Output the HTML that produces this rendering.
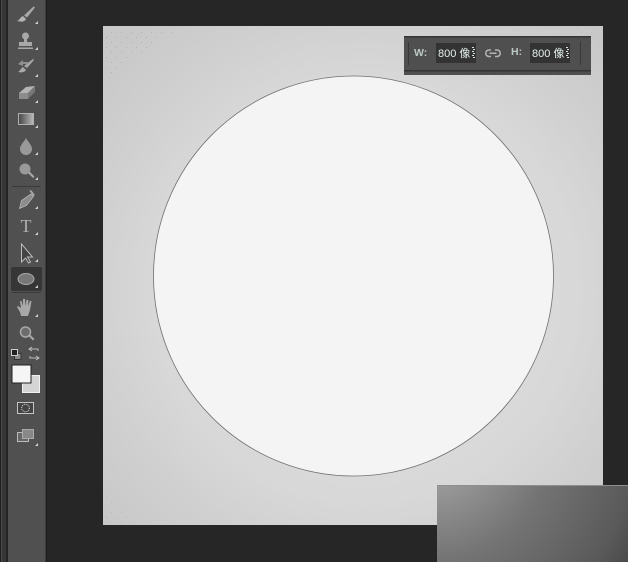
<!DOCTYPE html>
<html><head><meta charset="utf-8"><style>
html,body{margin:0;padding:0;background:#262626}
svg{display:block}
text{font-family:"Liberation Sans","Noto Sans CJK SC",sans-serif}
</style></head><body>
<svg width="628" height="562" viewBox="0 0 628 562" xmlns="http://www.w3.org/2000/svg">
<defs>
<radialGradient id="bg" gradientUnits="userSpaceOnUse" cx="365" cy="290" r="350">
<stop offset="0" stop-color="#e2e2e2"/><stop offset="0.6" stop-color="#d8d8d8"/><stop offset="0.78" stop-color="#d0d0d0"/><stop offset="1" stop-color="#c8c8c8"/></radialGradient>
<radialGradient id="cr" gradientUnits="userSpaceOnUse" cx="430" cy="440" r="240">
<stop offset="0.19" stop-color="#999"/><stop offset="0.5" stop-color="#747474"/><stop offset="0.85" stop-color="#5a5a5a"/><stop offset="0.97" stop-color="#4a4a4a"/></radialGradient>
<linearGradient id="gr" x1="0" x2="1" y1="0" y2="0"><stop offset="0" stop-color="#444"/><stop offset="1" stop-color="#bbb"/></linearGradient>
<pattern id="sp" width="8" height="8" patternUnits="userSpaceOnUse"><rect x="1" y="2" width="1" height="1" fill="#585858"/><rect x="5" y="6" width="1" height="1" fill="#585858"/></pattern>
<pattern id="dots" width="10" height="10" patternUnits="userSpaceOnUse"><rect x="1" y="2" width="1" height="1" fill="#a8a8a8"/><rect x="6" y="7" width="1" height="1" fill="#a8a8a8"/></pattern>
</defs>
<rect width="628" height="562" fill="#262626"/>
<rect x="0" y="0" width="8" height="562" fill="#363636"/>
<rect x="0" y="0" width="1" height="562" fill="#1e1e1e"/>
<rect x="1" y="0" width="1" height="562" fill="#4a4a4a"/>
<rect x="6" y="0" width="2" height="562" fill="#242424"/>
<rect x="8" y="0" width="37" height="562" fill="#505050"/>
<rect x="8" y="0" width="37" height="562" fill="url(#sp)"/>
<rect x="45" y="0" width="1" height="562" fill="#3a3a3a"/>
<rect x="46" y="0" width="1" height="562" fill="#1e1e1e"/>

<rect x="103" y="26" width="500" height="499" fill="url(#bg)"/>
<path d="M105 28h75l-75 50z" fill="url(#dots)" opacity=".7"/>
<path d="M602 27v25l-30-25z" fill="url(#dots)" opacity=".4"/>
<path d="M104 524v-30l30 30z" fill="url(#dots)" opacity=".4"/>
<circle cx="353.500" cy="276" r="200" fill="#f4f4f4" stroke="#707070" stroke-width="0.8"/>

<!-- options bar -->
<rect x="404" y="36" width="187" height="39" fill="#4f4f4f"/>
<rect x="404" y="36" width="187" height="39" fill="url(#sp)"/>
<rect x="404" y="36" width="187" height="1.500" fill="#363636"/>
<rect x="404" y="70" width="187" height="1.500" fill="#333"/>
<rect x="408" y="42" width="1" height="23" fill="#383838"/>
<rect x="580" y="42" width="1" height="23" fill="#383838"/>
<rect x="436" y="43" width="40" height="20" fill="#333"/>
<rect x="530" y="43" width="40" height="20" fill="#333"/>
<text x="414" y="56" font-size="10.500" font-weight="bold" fill="#bcc8c4">W:</text>
<text x="511" y="55" font-size="10.500" font-weight="bold" fill="#bcc8c4">H:</text>
<text x="438" y="57" font-size="11" fill="#e4f0ec">800 像</text>
<text x="532" y="57" font-size="11" fill="#e4f0ec">800 像</text>
<g fill="#d8e0dc"><rect x="472" y="47" width="2" height="1"/><rect x="473" y="49" width="2" height="1"/><rect x="472" y="51" width="2" height="1"/><rect x="473" y="53" width="2" height="1"/><rect x="472" y="55" width="2" height="1"/><rect x="473" y="57" width="2" height="1"/>
<rect x="566" y="47" width="2" height="1"/><rect x="567" y="49" width="2" height="1"/><rect x="566" y="51" width="2" height="1"/><rect x="567" y="53" width="2" height="1"/><rect x="566" y="55" width="2" height="1"/><rect x="567" y="57" width="2" height="1"/></g>
<path d="M491 50h-2a3 3 0 0 0 0 6.500h2M495 50h2a3 3 0 0 1 0 6.500h-2M489.500 53.200h7" fill="none" stroke="#b4b4b4" stroke-width="1.500"/>

<!-- corner panel -->
<rect x="437" y="485" width="191" height="77" fill="url(#cr)"/>
<rect x="437" y="485" width="191" height="1" fill="#8e8e8e"/>

<!-- toolbar icons -->
<g fill="#a8a8a8" stroke="none">
<path d="M33.500 6.500l1.500 1-8 10-3-2z"/><path d="M23 16l3 3c-1 3-5 3-9 2 3-1 3-4 6-5z" fill="#b4b4b4"/>
<circle cx="25.500" cy="36" r="3.500"/><path d="M24 38h3v4h5v4H19v-4h5z"/><rect x="18" y="47.500" width="15" height="1.500"/>
<path d="M33 59l1 1-7 8-3-2z"/><path d="M23 67l3 3c-1 2-4 3-8 2 2-1 3-4 5-5z"/><path d="M18 64l5-4v2h5v2h-5v2z" fill="#909090"/>
<path d="M26 87l9-1-7 7h-9z" fill="#b4b4b4"/><path d="M19 93h9v6h-9z" fill="#8c8c8c"/><path d="M28 93l7-7v6l-7 7z" fill="#777"/>
<path d="M26 138c2 4 6 7 6 11a6 6 0 0 1-12 0c0-4 4-7 6-11z" fill="#999"/>
<circle cx="25" cy="169" r="5.500" fill="#999"/><path d="M28 173l1.500-1.500 5 5-1.500 1.500z"/>
<path d="M31 194l2.500 2.500-7 9-7 3 2-8z" fill="#8c8c8c" stroke="#bbb" stroke-width=".7"/><path d="M29.500 191l1.500-1 4 5-1.500 1z"/>
<path d="M21.500 244v18l4-4 3 5 2-1-3-5h5z" fill="#444" stroke="#bcbcbc" stroke-width="1"/>
<path d="M20 312l-3-5 1-1 3 2-1-7h1.500l1.500 5v-7h2l.5 7 1-6h2l-.5 6 2-5h1.500l-1.500 9-2 6h-7z"/>
<circle cx="25.500" cy="332" r="5" fill="#6c6c6c" stroke="#a8a8a8" stroke-width="1.500"/><path d="M28.500 336l1.500-1.500 4.500 4.500-1.500 1.500z"/>
</g>
<rect x="18.500" y="113.500" width="15" height="11" fill="url(#gr)" stroke="#b0b0b0"/>
<text x="26" y="232" font-size="18" fill="#b0b0b0" text-anchor="middle" style="font-family:'Liberation Serif',serif">T</text>
<rect x="12" y="186" width="29" height="1" fill="#3a3a3a"/>
<rect x="12" y="292" width="29" height="1" fill="#3a3a3a"/>
<rect x="11" y="267" width="31" height="24" rx="2" fill="#363636"/>
<ellipse cx="26" cy="279" rx="8" ry="5.500" fill="#777" stroke="#aaa"/>
<g fill="#d0d0d0">
<path d="M38 21v3h-3z"/><path d="M38 47v3h-3z"/><path d="M38 74v3h-3z"/><path d="M38 100v3h-3z"/><path d="M38 125v3h-3z"/><path d="M38 152v3h-3z"/><path d="M38 177v3h-3z"/><path d="M38 206v3h-3z"/><path d="M38 232v3h-3z"/><path d="M38 259v3h-3z"/><path d="M38 285v3h-3z"/><path d="M38 314v3h-3z"/><path d="M38 443v3h-3z"/>
</g>
<rect x="14.500" y="353.500" width="6.500" height="6" fill="#888" stroke="#333"/><rect x="11.500" y="349.500" width="6" height="6" fill="#222" stroke="#ccc"/>
<path d="M30 349h8v2M38 358h-8v-2M32 347l-3 2 3 2M36 356l3 2-3 2" fill="none" stroke="#bcbcbc" stroke-width="1"/>
<rect x="22.500" y="375.500" width="17" height="17" fill="#d4d4d4" stroke="#f0f0f0"/>
<rect x="12" y="365" width="19" height="18" fill="#f5f5f5" stroke="#222"/>
<rect x="17.500" y="402.500" width="16" height="11" fill="#444" stroke="#c4c4c4"/>
<circle cx="25.500" cy="408" r="3.800" fill="none" stroke="#ddd" stroke-dasharray="1 1"/>
<rect x="17.500" y="432.500" width="11" height="9" fill="#666" stroke="#bbb"/>
<rect x="22.500" y="429.500" width="11" height="9" fill="#888" stroke="#aaa"/>
</svg>
</body></html>
